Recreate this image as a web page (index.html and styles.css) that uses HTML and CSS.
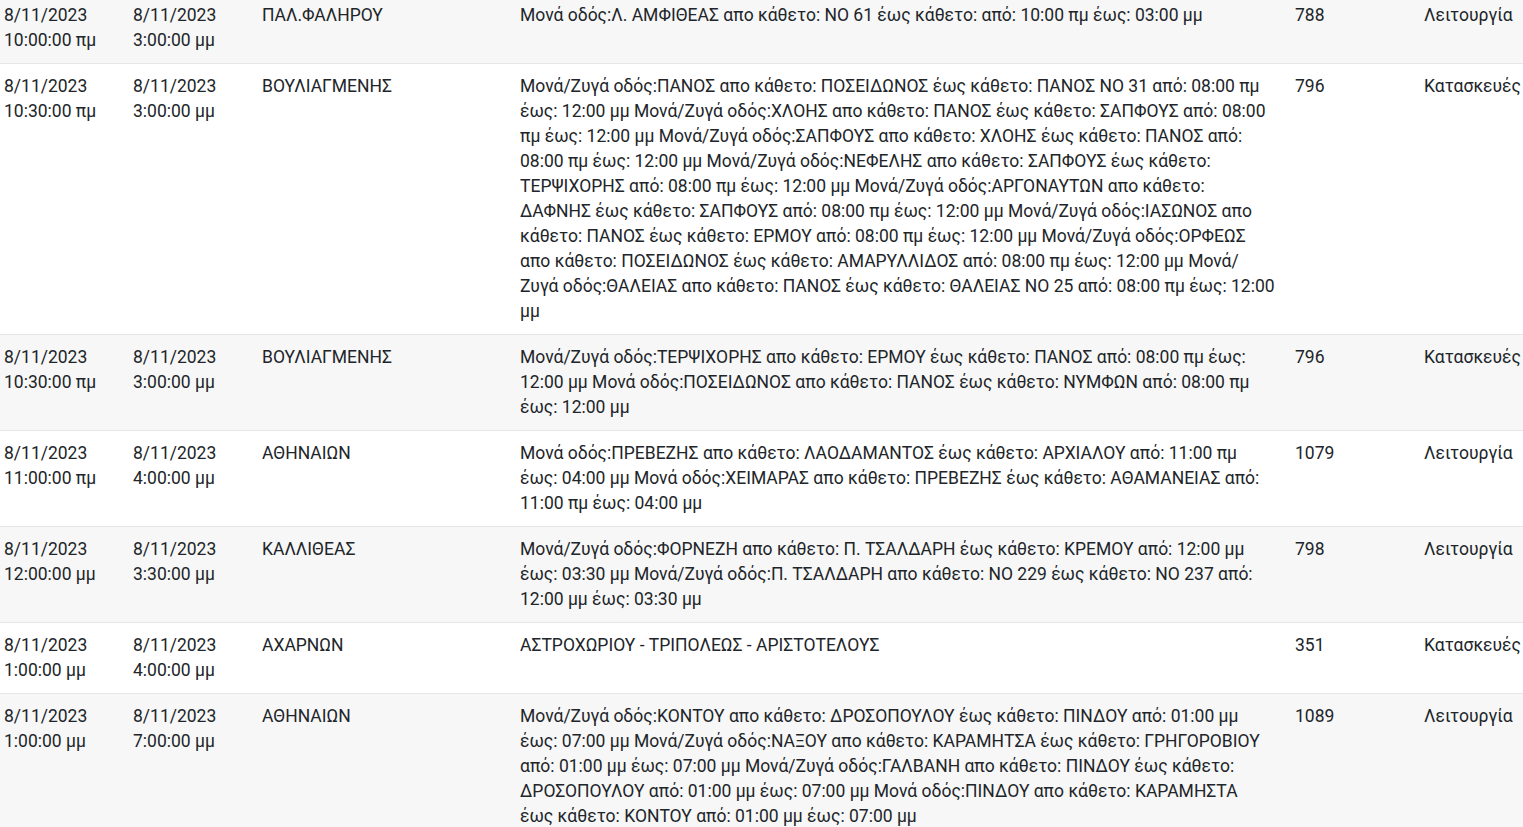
FILE: index.html
```html
<!DOCTYPE html>
<html lang="el">
<head>
    <meta charset="UTF-8">
    <meta name="viewport" content="width=device-width, initial-scale=1.0">
    <title>Κυκλοφοριακές ρυθμίσεις</title>
    <link rel="stylesheet" href="styles.css">
</head>
<body>
    <div class="table-wrap">
        <table class="works">
            <colgroup>
                <col class="col-date">
                <col class="col-date">
                <col class="col-street">
                <col class="col-desc">
                <col class="col-num">
                <col class="col-type">
            </colgroup>
            <tbody>
                <tr>
                    <td>8/11/2023 10:00:00 πμ</td>
                    <td>8/11/2023 3:00:00 μμ</td>
                    <td>ΠΑΛ.ΦΑΛΗΡΟΥ</td>
                    <td>Μονά οδός:Λ. ΑΜΦΙΘΕΑΣ απο κάθετο: ΝΟ 61 έως κάθετο: από: 10:00 πμ έως: 03:00 μμ</td>
                    <td>788</td>
                    <td>Λειτουργία</td>
                </tr>
                <tr>
                    <td>8/11/2023 10:30:00 πμ</td>
                    <td>8/11/2023 3:00:00 μμ</td>
                    <td>ΒΟΥΛΙΑΓΜΕΝΗΣ</td>
                    <td>Μονά/Ζυγά οδός:ΠΑΝΟΣ απο κάθετο: ΠΟΣΕΙΔΩΝΟΣ έως κάθετο: ΠΑΝΟΣ ΝΟ 31 από: 08:00 πμ έως: 12:00 μμ Μονά/Ζυγά οδός:ΧΛΟΗΣ απο κάθετο: ΠΑΝΟΣ έως κάθετο: ΣΑΠΦΟΥΣ από: 08:00 πμ έως: 12:00 μμ Μονά/Ζυγά οδός:ΣΑΠΦΟΥΣ απο κάθετο: ΧΛΟΗΣ έως κάθετο: ΠΑΝΟΣ από: 08:00 πμ έως: 12:00 μμ Μονά/Ζυγά οδός:ΝΕΦΕΛΗΣ απο κάθετο: ΣΑΠΦΟΥΣ έως κάθετο: ΤΕΡΨΙΧΟΡΗΣ από: 08:00 πμ έως: 12:00 μμ Μονά/Ζυγά οδός:ΑΡΓΟΝΑΥΤΩΝ απο κάθετο: ΔΑΦΝΗΣ έως κάθετο: ΣΑΠΦΟΥΣ από: 08:00 πμ έως: 12:00 μμ Μονά/Ζυγά οδός:ΙΑΣΩΝΟΣ απο κάθετο: ΠΑΝΟΣ έως κάθετο: ΕΡΜΟΥ από: 08:00 πμ έως: 12:00 μμ Μονά/Ζυγά οδός:ΟΡΦΕΩΣ απο κάθετο: ΠΟΣΕΙΔΩΝΟΣ έως κάθετο: ΑΜΑΡΥΛΛΙΔΟΣ από: 08:00 πμ έως: 12:00 μμ Μονά/Ζυγά οδός:ΘΑΛΕΙΑΣ απο κάθετο: ΠΑΝΟΣ έως κάθετο: ΘΑΛΕΙΑΣ ΝΟ 25 από: 08:00 πμ έως: 12:00 μμ</td>
                    <td>796</td>
                    <td>Κατασκευές</td>
                </tr>
                <tr>
                    <td>8/11/2023 10:30:00 πμ</td>
                    <td>8/11/2023 3:00:00 μμ</td>
                    <td>ΒΟΥΛΙΑΓΜΕΝΗΣ</td>
                    <td>Μονά/Ζυγά οδός:ΤΕΡΨΙΧΟΡΗΣ απο κάθετο: ΕΡΜΟΥ έως κάθετο: ΠΑΝΟΣ από: 08:00 πμ έως: 12:00 μμ Μονά οδός:ΠΟΣΕΙΔΩΝΟΣ απο κάθετο: ΠΑΝΟΣ έως κάθετο: ΝΥΜΦΩΝ από: 08:00 πμ έως: 12:00 μμ</td>
                    <td>796</td>
                    <td>Κατασκευές</td>
                </tr>
                <tr>
                    <td>8/11/2023 11:00:00 πμ</td>
                    <td>8/11/2023 4:00:00 μμ</td>
                    <td>ΑΘΗΝΑΙΩΝ</td>
                    <td>Μονά οδός:ΠΡΕΒΕΖΗΣ απο κάθετο: ΛΑΟΔΑΜΑΝΤΟΣ έως κάθετο: ΑΡΧΙΑΛΟΥ από: 11:00 πμ έως: 04:00 μμ Μονά οδός:ΧΕΙΜΑΡΑΣ απο κάθετο: ΠΡΕΒΕΖΗΣ έως κάθετο: ΑΘΑΜΑΝΕΙΑΣ από: 11:00 πμ έως: 04:00 μμ</td>
                    <td>1079</td>
                    <td>Λειτουργία</td>
                </tr>
                <tr>
                    <td>8/11/2023 12:00:00 μμ</td>
                    <td>8/11/2023 3:30:00 μμ</td>
                    <td>ΚΑΛΛΙΘΕΑΣ</td>
                    <td>Μονά/Ζυγά οδός:ΦΟΡΝΕΖΗ απο κάθετο: Π. ΤΣΑΛΔΑΡΗ έως κάθετο: ΚΡΕΜΟΥ από: 12:00 μμ έως: 03:30 μμ Μονά/Ζυγά οδός:Π. ΤΣΑΛΔΑΡΗ απο κάθετο: ΝΟ 229 έως κάθετο: ΝΟ 237 από: 12:00 μμ έως: 03:30 μμ</td>
                    <td>798</td>
                    <td>Λειτουργία</td>
                </tr>
                <tr>
                    <td>8/11/2023 1:00:00 μμ</td>
                    <td>8/11/2023 4:00:00 μμ</td>
                    <td>ΑΧΑΡΝΩΝ</td>
                    <td>ΑΣΤΡΟΧΩΡΙΟΥ - ΤΡΙΠΟΛΕΩΣ - ΑΡΙΣΤΟΤΕΛΟΥΣ</td>
                    <td>351</td>
                    <td>Κατασκευές</td>
                </tr>
                <tr>
                    <td>8/11/2023 1:00:00 μμ</td>
                    <td>8/11/2023 7:00:00 μμ</td>
                    <td>ΑΘΗΝΑΙΩΝ</td>
                    <td>Μονά/Ζυγά οδός:ΚΟΝΤΟΥ απο κάθετο: ΔΡΟΣΟΠΟΥΛΟΥ έως κάθετο: ΠΙΝΔΟΥ από: 01:00 μμ έως: 07:00 μμ Μονά/Ζυγά οδός:ΝΑΞΟΥ απο κάθετο: ΚΑΡΑΜΗΤΣΑ έως κάθετο: ΓΡΗΓΟΡΟΒΙΟΥ από: 01:00 μμ έως: 07:00 μμ Μονά/Ζυγά οδός:ΓΑΛΒΑΝΗ απο κάθετο: ΠΙΝΔΟΥ έως κάθετο: ΔΡΟΣΟΠΟΥΛΟΥ από: 01:00 μμ έως: 07:00 μμ Μονά οδός:ΠΙΝΔΟΥ απο κάθετο: ΚΑΡΑΜΗΣΤΑ έως κάθετο: ΚΟΝΤΟΥ από: 01:00 μμ έως: 07:00 μμ</td>
                    <td>1089</td>
                    <td>Λειτουργία</td>
                </tr>
            </tbody>
        </table>
    </div>
</body>
</html>
```

FILE: styles.css
```css
body {
    font-family: Roboto, Arial, sans-serif;
    color: #212529;
    background: #fff;
    margin: 0;
    padding: 0;
    overflow-x: hidden;
}
.table-wrap {
    margin-top: -8px; /* page is scrolled a little into the list */
}
.works {
    width: 1549px;
    table-layout: fixed;
    border-collapse: collapse;
    font-size: 17.5px;
    line-height: 25px;
}
.col-date {
    width: 129px;
}
.col-street {
    width: 258px;
}
.col-desc {
    width: 775px;
}
.col-num {
    width: 129px;
}
.col-type {
    width: 129px;
}
.works td {
    padding: 10px 16px 10px 4px;
    vertical-align: top;
    border-top: 1px solid #e6e6e6;
}
.works tr:nth-child(odd) {
    background: #f7f7f7;
}
```
